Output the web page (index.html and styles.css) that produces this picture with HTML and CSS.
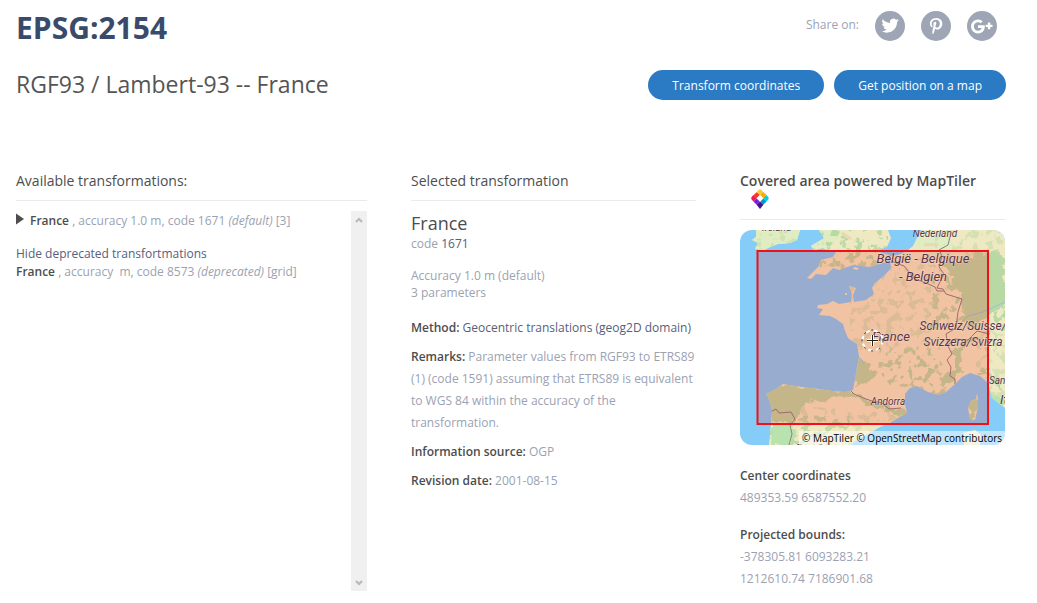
FILE: index.html
```html
<!DOCTYPE html>
<html lang="en">
<head>
<meta charset="utf-8">
<title>EPSG:2154</title>
<link rel="stylesheet" href="styles.css">
</head>
<body>
<main class="page">
  <header class="top">
    <div class="titles">
      <h1 class="title">EPSG:2154</h1>
      <p class="subtitle">RGF93 / Lambert-93 -- France</p>
    </div>
    <div class="actions">
      <div class="share">
        <span class="share-label">Share on:</span>
        <a class="share-link" href="#" aria-label="Twitter"><svg viewBox="0 0 30 30"><path transform="translate(6.500 6) scale(.72)" d="M23.950 4.570a10 10 0 0 1-2.820.770 4.960 4.960 0 0 0 2.160-2.720c-.950.550-2 .950-3.130 1.180a4.920 4.920 0 0 0-8.380 4.480C7.690 8.090 4.070 6.130 1.640 3.160a4.820 4.820 0 0 0-.670 2.480c0 1.710.870 3.210 2.190 4.100a4.900 4.900 0 0 1-2.230-.620v.060a4.920 4.920 0 0 0 3.950 4.830 5 5 0 0 1-2.210.080 4.940 4.940 0 0 0 4.600 3.420A9.870 9.870 0 0 1 0 19.540a14 14 0 0 0 7.550 2.210c9.050 0 14-7.500 14-13.980 0-.210 0-.420-.020-.630a9.940 9.940 0 0 0 2.460-2.550z"/></svg></a>
        <a class="share-link" href="#" aria-label="Pinterest"><svg viewBox="0 0 30 30"><path transform="translate(8.500 7)" d="M6.800 0C2.600 0 .400 2.800.400 5.700c0 1.400.800 3.100 2 3.600.300.100.300 0 .400-.200l.200-.900c0-.200 0-.300-.100-.400-.400-.500-.700-1.300-.700-2.100 0-2 1.500-4 4.200-4 2.300 0 3.900 1.500 3.900 3.700 0 2.500-1.300 4.200-2.900 4.200-.900 0-1.600-.700-1.400-1.600.300-1.100.800-2.200.800-3 0-.700-.400-1.300-1.200-1.300-.900 0-1.700 1-1.700 2.200 0 .800.300 1.400.300 1.400l-1.200 5c-.200 1.100-.100 3 .200 4.200.700-.900 1.500-2.400 1.800-3.600l.600-2.400c.300.600 1.200 1.100 2.200 1.100 2.900 0 5-2.700 5-6.100C12.800 2.300 10.200 0 6.800 0z"/></svg></a>
        <a class="share-link" href="#" aria-label="Google Plus"><svg viewBox="0 0 30 30"><path d="M11 14.200v2.800h3.700c-.300 1.300-1.600 2.700-3.700 2.700a4.200 4.200 0 0 1 0-8.400c1.300 0 2.200.500 2.700 1l2-2A6.700 6.700 0 0 0 11 8.500a7 7 0 1 0 0 14c4.100 0 6.800-2.900 6.800-6.900l-.100-1.400zM23.300 13.700v-2.200h-2.400v2.200h-2.200v2.400h2.200v2.200h2.400v-2.200h2.200v-2.400z"/></svg></a>
      </div>
      <div class="buttons">
        <button class="button" type="button">Transform coordinates</button>
        <button class="button" type="button">Get position on a map</button>
      </div>
    </div>
  </header>

  <div class="columns">
    <section>
      <h2 class="heading">Available transformations:</h2>
      <div class="list">
        <div class="list-body">
          <p class="item"><svg class="marker" viewBox="0 0 8 12"><path d="M0 0.500 8 6 0 11.500z"/></svg><a class="name" href="#">France</a> , accuracy 1.0 m, code 1671 <i>(default)</i> [3]</p>
          <p class="toggle"><a class="link" href="#">Hide deprecated transfortmations</a></p>
          <p class="item"><a class="name" href="#">France</a> , accuracy &nbsp;m, code 8573 <i>(deprecated)</i> [grid]</p>
        </div>
        <div class="scrollbar" aria-hidden="true">
          <svg viewBox="0 0 8 6"><path d="M1 5 4 2 7 5"/></svg>
          <svg viewBox="0 0 8 6"><path d="M1 1 4 4 7 1"/></svg>
        </div>
      </div>
    </section>

    <section>
      <h2 class="heading">Selected transformation</h2>
      <h3 class="selected">France</h3>
      <p class="line">code <a class="link" href="#">1671</a></p>
      <p class="line summary">Accuracy 1.0 m (default)<br>3 parameters</p>
      <p class="detail"><b>Method:</b> <a class="link" href="#">Geocentric translations (geog2D domain)</a></p>
      <p class="detail"><b>Remarks:</b> Parameter values from RGF93 to ETRS89 (1) (code 1591) assuming that ETRS89 is equivalent to WGS 84 within the accuracy of the transformation.</p>
      <p class="detail"><b>Information source:</b> OGP</p>
      <p class="detail"><b>Revision date:</b> 2001-08-15</p>
    </section>

    <section>
      <h2 class="heading powered">Covered area powered by MapTiler
        <svg class="logo" viewBox="0 0 18 20" role="img" aria-label="MapTiler">
          <path fill="#fbc935" d="M5.500 3.200 7.500 1Q9-.500 10.500 1L12.500 3.200 9 6.500z"/>
          <path fill="#ffaa01" d="M12.300 3 15.500 6 12.200 9.400 9 6.300z"/>
          <path fill="#05d0df" d="M15.400 6C18.500 8.500 18.300 10 15.500 12.500L12.200 9.300z"/>
          <path fill="#0399c7" d="M12.200 9.300 15.500 12.500 12.300 15.700 9 12.500z"/>
          <path fill="#3a1888" d="M9 12.500 12.400 15.700 9 20 5.600 15.700z"/>
          <path fill="#7a1ce9" d="M5.800 9.300 9 12.500 5.600 15.700 2.400 12.500z"/>
          <path fill="#f1175d" d="M2.500 6 5.800 9.300 2.500 12.500C-.500 10-.500 8.500 2.500 6z"/>
          <path fill="#fb3a1b" d="M5.500 3.200 9 6.300 5.800 9.400 2.500 6.200z"/>
          <path fill="#fff" d="M9 5.800 12.500 9.300 9 12.800 5.500 9.300z"/>
        </svg>
      </h2>
      <div class="map">
        <svg class="map-picture" viewBox="0 0 265 215" role="img" aria-label="Map of France">
          <defs>
            <clipPath id="land"><path d="M182 0 177 8 173 16 167 21 158 25 150 26 151 38 145 45 135 53 132 58 134 64 126 70 114 72 113 65 116 58 109 56 112 64 111 72 99 74 93 71 87 74 78 75 77 78 83 79 79 85 90 86 96 89 103 94 105 101 108 108 112 111 117 114 119 126 117 138 113 160 106 162 92 161 79 159 62 157 56 156 43 154 36 159 26 164 29 169 32 180 31 194 29 215 110 215 119 209 130 203 140 197 150 193 158 188 167 183 165 174 165 164 170 158 177 156 188 162 198 165 206 162 215 154 222 147 230 143 240 146 247 152 252 168 265 178V0z"/><path d="M79 0 84 8 76 13 71 16 74 20 83 18 91 22 96 22 93 27 81 30 78 37 67 48 71 49 76 44 86 45 93 38 99 40 113 35 130 37 136 35 147 32 149 25 136 21 147 17 151 8 148 0z"/><path d="M16 0 16 7 12 10 18 13 15 19 24 20 30 17 38 14 50 13 57 10 60 0z"/><path d="M236 169 237 163 238 169 238 177 235 190 230 189 228 178 231 171zM223 203 235 200 241 205 240 215H224z"/></clipPath>
            <filter id="rough" x="-5%" y="-5%" width="110%" height="110%" color-interpolation-filters="sRGB">
              <feTurbulence type="fractalNoise" baseFrequency=".12" numOctaves="3" seed="4"/>
              <feDisplacementMap in="SourceGraphic" scale="12" xChannelSelector="R" yChannelSelector="G"/>
            </filter>
            <filter id="speckle" x="0" y="0" width="100%" height="100%" color-interpolation-filters="sRGB">
              <feTurbulence type="fractalNoise" baseFrequency=".13" numOctaves="3" seed="9"/>
              <feColorMatrix values="0 0 0 0 0  0 0 0 0 0  0 0 0 0 0  14 0 0 0 -7.6" result="spots"/>
              <feComposite in="SourceGraphic" in2="spots" operator="in"/>
            </filter>
          </defs>
          <path fill="#85cdf8" d="M0 0H265V215H0z"/>
          <g clip-path="url(#land)">
            <path fill="#efe9c3" d="M0 0H265V215H0z"/>
            <path fill="#e0edc2" d="M0 0H62V22H0zM64 0H105L95 12 84 22H64zM175 0 205 5 218 18 205 28 177 21z"/>
            <path fill="#b9d9a4" filter="url(#rough)" d="M206 30 219 34 235 25 258 20 265 29V74L250 86 238 92 226 90 222 76 220 66 212 54zM25 161 43 154 79 159 109 161 125 169 136 174 150 175 169 183 160 188 148 181 131 177 112 168 99 166 82 173 66 171 62 183 50 194 31 190zM119 125 126 132 136 144 125 153 114 157zM222 112 236 108 232 114 222 118 220 134 222 142 212 152 200 156 206 146 214 138 214 124zM231 171 237 165 238 178 235 189 229 187zM236 142 250 146 262 162 262 152 246 140z"/>
            <path fill="#b9d9a4" filter="url(#speckle)" d="M190 36 265 20V100H190zM140 118 190 118 215 150 200 168 175 158 150 155 138 140zM30 186H110V215H30zM68 0H148V40H68z"/>
            <path fill="#c3dba8" opacity=".6" filter="url(#speckle)" d="M110 28H200V120H110zM195 0H265V30H195zM236 96H265V180H236zM60 176 170 184 130 215H60zM0 0H60V20H0z"/>
            <path fill="#b9e3ae" filter="url(#rough)" d="M30 196H54L58 205 50 215H29zM248 160 265 170V180L250 172z"/>
            <g fill="none" stroke="#ead8b0" stroke-width="3">
              <path d="M184 15 198 14M102 3 111 9"/>
            </g>
            <g fill="none" stroke="#8f7f82" stroke-width="1">
              <path d="M210 7 208 15 199 20 202 26 199 37 204 44 197 58 203 59 206 64 222 69 218 82 216 98 206 104 208 116M151 31 164 36 175 49 186 53 195 57 197 61 204 61M208 115 215 109 228 110 237 101 250 104M208 116 212 124 207 130 211 137 210 146 215 149 215 154M109 159 114 164 126 169 132 171 142 173 149 179 161 178M30 182 36 179 39 183 51 182 55 189 50 195 52 204 49 215"/>
            </g>
            <path d="M220 94 228 86 243 82 265 72" fill="none" stroke="#9dbfdc" stroke-width="1"/>
          </g>
          <path d="M117 126 122 130 124 134" fill="none" stroke="#85cdf8" stroke-width="1"/>
          <path d="M105 63h2v2h-2zM114 37l5 1-2 2-4-1z" fill="#efe9c3"/>
          <path class="extent" d="M17.500 21H248V194H17.500z"/>
          <g class="places">
            <text x="22" y="1" font-size="10">Ireland</text>
            <text x="195" y="7" font-size="10" text-anchor="middle">Nederland</text>
            <text x="183" y="33" font-size="13" text-anchor="middle">België - Belgique</text>
            <text x="183" y="51" font-size="13" text-anchor="middle">- Belgien</text>
            <text x="151" y="111" font-size="13" text-anchor="middle">France</text>
            <text x="223" y="100" font-size="12" text-anchor="middle">Schweiz/Suisse/</text>
            <text x="223" y="116" font-size="12" text-anchor="middle">Svizzera/Svizra</text>
            <text x="148" y="175" font-size="10" text-anchor="middle">Andorra</text>
            <text x="249" y="154" font-size="10">San Marino</text>
            <text x="260" y="174" font-size="13">Italia</text>
            <text x="56" y="222" font-size="10">España</text>
          </g>
          <g fill="none">
            <circle cx="132.500" cy="110.500" r="10" stroke="#fff" stroke-width="2" stroke-dasharray="4 4"/>
            <circle cx="132.500" cy="110.500" r="10.500" stroke="#222" stroke-width="1" stroke-dasharray="2 6"/>
            <path d="M127 110.500H138M132.500 105V116" stroke="#fff" stroke-width="3"/>
            <path d="M127 110.500H138M132.500 105V116" stroke="#222" stroke-width="1"/>
          </g>
        </svg>
        <div class="credit">© <a href="#">MapTiler</a> © <a href="#">OpenStreetMap contributors</a></div>
      </div>
      <p class="coords"><b>Center coordinates</b><br>489353.59 6587552.20</p>
      <p class="coords"><b>Projected bounds:</b><br>-378305.81 6093283.21<br>1212610.74 7186901.68</p>
    </section>
  </div>
</main>
</body>
</html>
```

FILE: styles.css
```css
* { box-sizing: border-box; }

body {
  margin: 0;
  background: #fff;
  color: #9ba2b2;
  font-family: "Open Sans", "Noto Sans", sans-serif;
  font-size: 12px;
  line-height: 18px;
}

h1, h2, h3, p { margin: 0; font-weight: 400; }
a { color: inherit; text-decoration: none; }
b { color: #4d4d4d; font-weight: 600; }

.page { padding: 8px 31px 12px 16px; }

.top {
  display: flex;
  justify-content: space-between;
  margin-bottom: 70px;
}

.title {
  color: #3a4a6b;
  font-size: 30px;
  font-weight: 700;
  line-height: 40px;
}

.subtitle {
  margin-top: 19px;
  color: #555;
  font-size: 23px;
  line-height: 34px;
}

.share {
  display: flex;
  align-items: center;
  justify-content: flex-end;
  gap: 16px;
  margin: 3px 9px 29px 0;
}

.share-label { line-height: 28px; align-self: flex-start; }

.share-link {
  width: 30px;
  height: 30px;
  border-radius: 50%;
  background: #9ea5b5;
}

.share-link svg { display: block; fill: #fff; }

.buttons { display: flex; gap: 10px; }

.button {
  height: 30px;
  padding: 1px 24px 0;
  border: 0;
  border-radius: 15px;
  background: #2b7ac4;
  color: #fff;
  font: 12px/29px "Open Sans", "Noto Sans", sans-serif;
}

.columns {
  display: grid;
  grid-template-columns: 351fr 285fr 266fr;
  column-gap: 44px;
}

.heading {
  padding-bottom: 10px;
  border-bottom: 1px solid #ebebeb;
  color: #4d4d4d;
  font-size: 14px;
  line-height: 19px;
}

.powered { font-weight: 600; }

.logo {
  display: block;
  width: 18px;
  height: 20px;
  margin: -1px 0 0 11px;
}

.list {
  display: flex;
  justify-content: space-between;
  height: 380px;
  margin-top: 10px;
}

.list-body { padding-top: 1px; }
.item { line-height: 18px; }
.marker { width: 8px; height: 12px; margin-right: 6px; fill: #4d4d4d; }
.name { color: #4d4d4d; font-weight: 600; }
.toggle { margin-top: 15px; }
.link { color: #56607c; }

.scrollbar {
  display: flex;
  flex-direction: column;
  justify-content: space-between;
  align-items: center;
  width: 16px;
  padding: 6px 0 5px;
  background: #f0f0f0;
}

.scrollbar svg {
  width: 8px;
  height: 6px;
  fill: none;
  stroke: #b8b8b8;
  stroke-width: 2;
}

.selected {
  margin-top: 10px;
  color: #4d4d4d;
  font-size: 18px;
  line-height: 24px;
}

.line { line-height: 17px; }
.summary { margin: 15px 0 16px; }
.detail { margin-bottom: 7px; line-height: 22px; }

.map {
  position: relative;
  margin: 10px 1px 20px 0;
  overflow: hidden;
  border-radius: 12px;
}

.map-picture { display: block; width: 100%; }
.extent { fill: rgba(255, 0, 0, .16); stroke: #f01018; stroke-width: 2; }

.places {
  fill: #59354b;
  stroke: rgba(255, 255, 255, .35);
  stroke-width: 1;
  paint-order: stroke;
  font-family: Roboto, sans-serif;
  font-style: italic;
  font-weight: 400;
}

.credit {
  position: absolute;
  right: 0;
  bottom: 0;
  padding: 0 3px;
  background: rgba(255, 255, 255, .5);
  color: #000;
  font-size: 10px;
  line-height: 14px;
}

.coords { margin-bottom: 15px; line-height: 22px; }
```
